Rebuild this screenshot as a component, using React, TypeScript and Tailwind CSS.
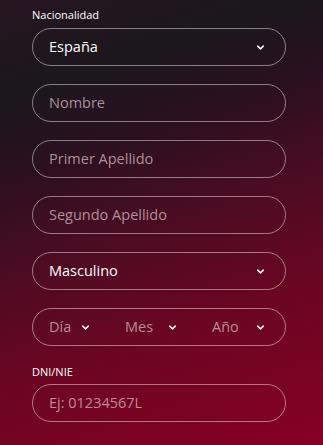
import { ChevronDown } from 'lucide-react'

function Chevron() {
  return <ChevronDown className="h-[11px] w-[11px] text-white" strokeWidth={3.2} />
}

function Field({ text, value, select }: { text: string; value?: boolean; select?: boolean }) {
  return (
    <div className="flex h-[38px] items-center justify-between rounded-full border border-white/45 pl-4 pr-[19px]">
      <span
        className={
          value
            ? 'text-[14.5px] font-medium text-white'
            : 'text-[14.5px] text-[#d0b0b9]/80'
        }
      >
        {text}
      </span>
      {select && <Chevron />}
    </div>
  )
}

function DateField() {
  const parts = [
    { label: 'Día', w: 'w-[42px]' },
    { label: 'Mes', w: 'w-[53px]' },
    { label: 'Año', w: 'w-[54px]' },
  ]
  return (
    <div className="flex h-[38px] items-center justify-between rounded-full border border-white/45 pl-4 pr-[19px]">
      {parts.map((p) => (
        <div key={p.label} className={`flex items-center justify-between ${p.w}`}>
          <span className="text-[14.5px] text-[#d0b0b9]/80">{p.label}</span>
          <Chevron />
        </div>
      ))}
    </div>
  )
}

export default function App() {
  return (
    <div
      className="h-[445px] w-[323px] overflow-hidden bg-[linear-gradient(162deg,#261520_0%,#1b171d_18%,#2a1020_32%,#4b0c22_50%,#6a0622_70%,#870024_100%)]"
      style={{ fontFamily: '"Open Sans", "Noto Sans", sans-serif' }}
    >
      <div className="ml-8 flex w-[254px] flex-col pt-[7px]">
        <label className="mb-[5px] h-[16px] text-[11px] leading-[16px] font-medium text-white">
          Nacionalidad
        </label>
        <div className="flex flex-col gap-[18px]">
          <Field text="España" value select />
          <Field text="Nombre" />
          <Field text="Primer Apellido" />
          <Field text="Segundo Apellido" />
          <Field text="Masculino" value select />
          <DateField />
        </div>
        <label className="mt-[18px] mb-[4px] h-[16px] text-[11px] leading-[16px] font-medium text-white">
          DNI/NIE
        </label>
        <Field text="Ej: 01234567L" />
      </div>
    </div>
  )
}
